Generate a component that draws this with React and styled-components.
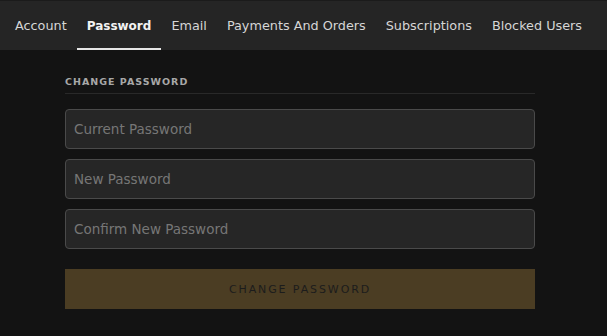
import React from 'react';
import styled, { createGlobalStyle } from 'styled-components';

const tabs = ['Account', 'Password', 'Email', 'Payments And Orders', 'Subscriptions', 'Blocked Users'];

const App = () => {
  return (
    <>
      <GlobalStyle />
      <Page>
        <TabBar>
          {tabs.map((t) => (
            <Tab key={t} active={t === 'Password'}>
              {t}
            </Tab>
          ))}
        </TabBar>
        <Section>
          <Heading>Change Password</Heading>
          <Field type='password' placeholder='Current Password' />
          <Field type='password' placeholder='New Password' />
          <Field type='password' placeholder='Confirm New Password' />
          <Submit>Change Password</Submit>
        </Section>
      </Page>
    </>
  );
};

const GlobalStyle = createGlobalStyle`
  body {
    margin: 0;
    background: #131313;
    font-family: "DejaVu Sans", "Open Sans", sans-serif;
  }
`;

const Page = styled.div`
  min-height: 336px;
  background: #131313;
`;

const TabBar = styled.nav`
  display: flex;
  height: 50px;
  padding: 0 5px;
  background: #252525;
  border-top: 1px solid #1b1b1b;
  box-sizing: border-box;
`;

const Tab = styled.div`
  display: flex;
  align-items: center;
  padding: 2px 10px 0;
  font-size: ${(p) => (p.active ? '12px' : '12.8px')};
  font-weight: ${(p) => (p.active ? 700 : 400)};
  color: ${(p) => (p.active ? '#f2f2f2' : '#d6d6d6')};
  border-bottom: 2px solid ${(p) => (p.active ? '#e6e6e6' : 'transparent')};
  white-space: nowrap;
`;

const Section = styled.div`
  display: flex;
  flex-direction: column;
  gap: 10px;
  width: 470px;
  margin: 0 auto 0 65px;
  padding-top: 26px;
`;

const Heading = styled.h2`
  margin: 0 0 5px;
  padding-bottom: 6px;
  border-bottom: 1px solid #292929;
  font-size: 9.5px;
  font-weight: 700;
  letter-spacing: 1px;
  text-transform: uppercase;
  color: #a8a8a8;
`;

const Field = styled.input`
  height: 40px;
  box-sizing: border-box;
  padding: 0 8px;
  background: #262626;
  border: 1px solid #4a4a4a;
  border-radius: 4px;
  font-family: inherit;
  font-size: 13.5px;
  color: #ddd;
  outline: none;

  &::placeholder {
    color: #767676;
  }
`;

const Submit = styled.button`
  height: 40px;
  margin-top: 10px;
  border: none;
  background: #4b3d23;
  font-family: inherit;
  font-size: 11px;
  letter-spacing: 1.9px;
  text-transform: uppercase;
  color: #1c1c1c;
  cursor: pointer;
`;

export default App;
